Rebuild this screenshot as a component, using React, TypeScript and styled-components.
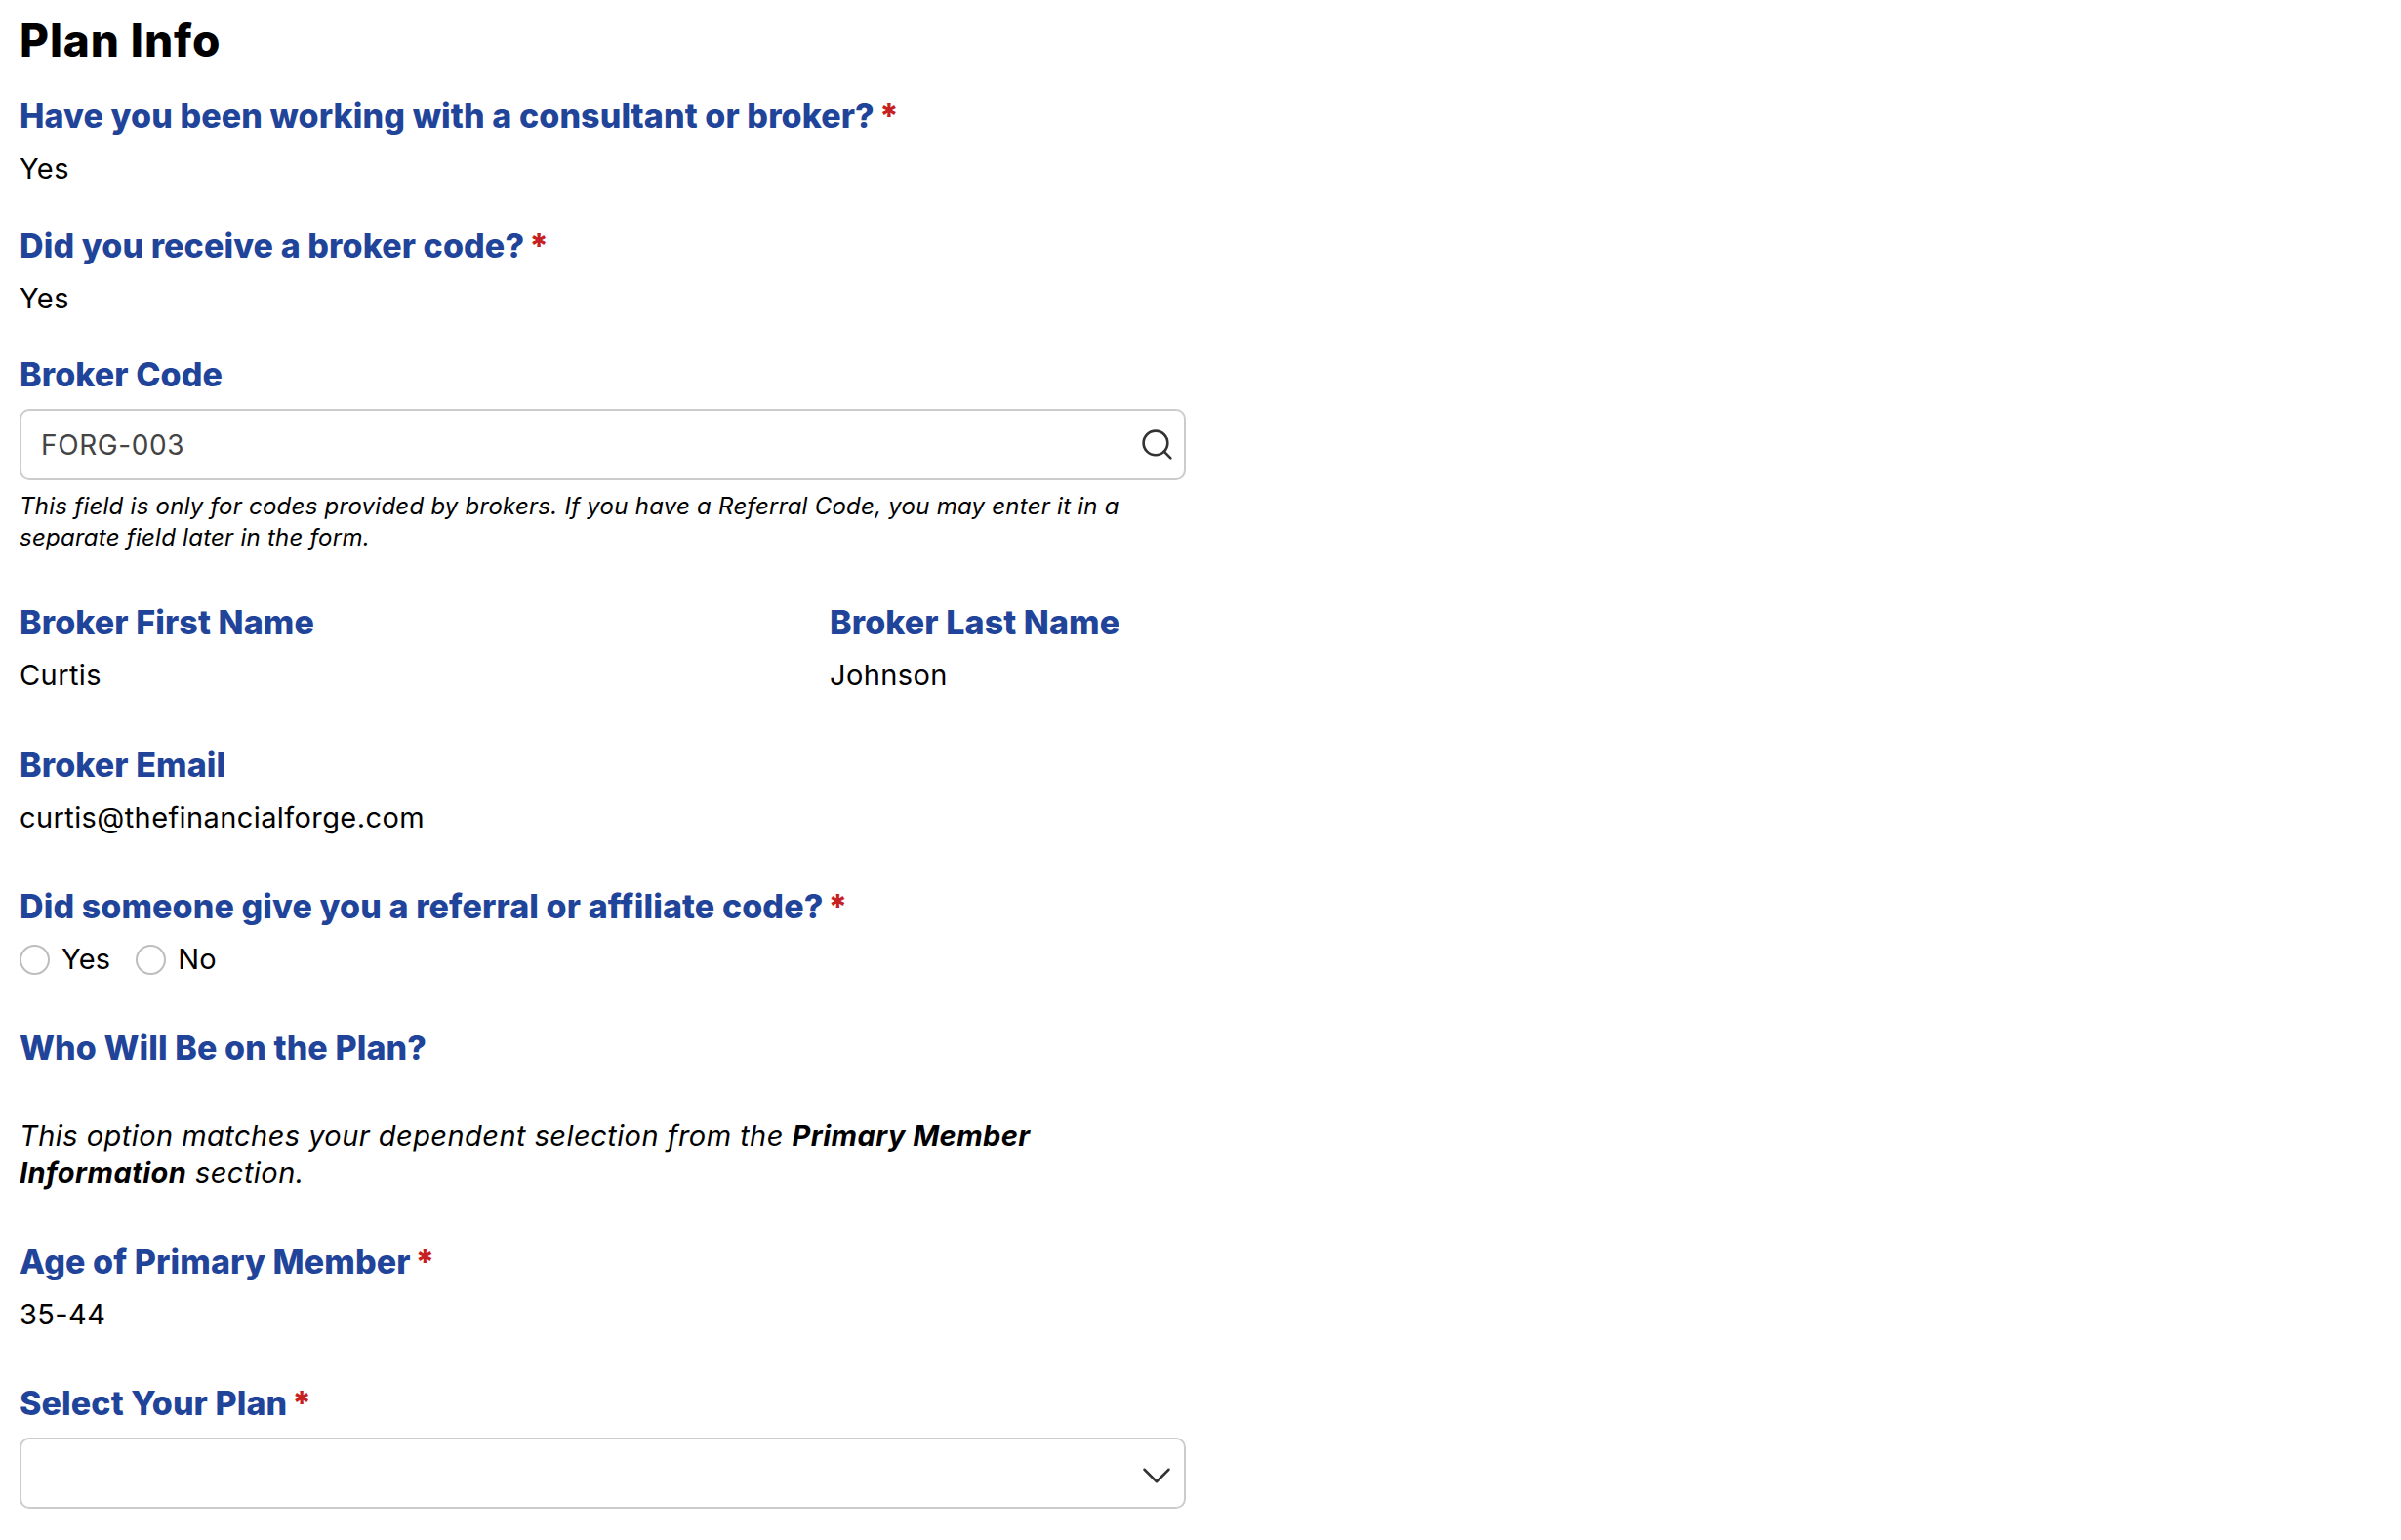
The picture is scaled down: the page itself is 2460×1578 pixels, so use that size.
import React from "react";
import styled, { createGlobalStyle } from "styled-components";
import { Search, ChevronDown } from "lucide-react";

const GlobalStyle = createGlobalStyle`
  html, body {
    margin: 0;
    padding: 0;
    background: #fff;
  }
  body {
    font-family: "Inter", "Noto Sans", sans-serif;
    color: #000;
  }
`;

const Page = styled.div`
  width: 1195px;
  padding: 14px 0 0 20px;
`;
const Title = styled.h2`
  margin: 0 0 31px;
  font-size: 46px;
  line-height: 54px;
  font-weight: 800;
  letter-spacing: 0.9px;
`;
const Field = styled.div<{ $gap?: number }>`
  margin-bottom: ${(props) => props.$gap ?? 53}px;
`;
const Label = styled.div`
  font-size: 34px;
  line-height: 40px;
  font-weight: 800;
  color: #1f4499;
  margin-bottom: 15px;
  letter-spacing: 0.1px;
`;
const Required = styled.span`
  color: #c62020;
  margin-left: 5px;
`;
const Value = styled.div`
  font-size: 29px;
  line-height: 38px;
  letter-spacing: 0.4px;
`;
const InputBox = styled.div<{ $iconPad: number }>`
  box-sizing: border-box;
  height: 73px;
  border: 2.5px solid #cccccc;
  border-radius: 10px;
  padding: 0 ${(props) => props.$iconPad}px 0 20px;
  display: flex;
  align-items: center;
  justify-content: space-between;
  font-size: 28px;
  letter-spacing: 0.6px;
  color: #444;
  background: #fff;
`;
const Hint = styled.div`
  font-size: 24px;
  line-height: 32px;
  font-style: italic;
  letter-spacing: 0.25px;
  margin-top: 11px;
`;
const Columns = styled.div`
  display: grid;
  grid-template-columns: 830px 1fr;
`;
const RadioRow = styled.div`
  display: flex;
  align-items: center;
  gap: 26px;
  font-size: 29px;
  line-height: 38px;
  letter-spacing: 0.2px;
`;
const RadioOption = styled.label`
  display: flex;
  align-items: center;
  gap: 12px;
`;
const RadioCircle = styled.span`
  box-sizing: border-box;
  width: 31px;
  height: 31px;
  border: 2.5px solid #bdbdbd;
  border-radius: 50%;
`;
const Note = styled.div`
  font-size: 29px;
  line-height: 38px;
  font-style: italic;
  letter-spacing: 0.45px;
  width: 1080px;
  b {
    font-weight: 700;
  }
`;
const ChevronIcon = styled(ChevronDown)`
  margin-top: 5px;
`;

const App = () => {
  return (
    <Page>
      <GlobalStyle />
      <Title>Plan Info</Title>
      <Field $gap={40}>
        <Label>Have you been working with a consultant or broker?<Required>*</Required></Label>
        <Value>Yes</Value>
      </Field>
      <Field $gap={39}>
        <Label>Did you receive a broker code?<Required>*</Required></Label>
        <Value>Yes</Value>
      </Field>
      <Field $gap={51}>
        <Label>Broker Code</Label>
        <InputBox $iconPad={9}>
          FORG-003
          <Search size={37} strokeWidth={1.7} color="#333" />
        </InputBox>
        <Hint>
          This field is only for codes provided by brokers. If you have a Referral Code, you may enter it in a separate field later in the form.
        </Hint>
      </Field>
      <Columns>
        <Field>
          <Label>Broker First Name</Label>
          <Value>Curtis</Value>
        </Field>
        <Field>
          <Label>Broker Last Name</Label>
          <Value>Johnson</Value>
        </Field>
      </Columns>
      <Field $gap={52}>
        <Label>Broker Email</Label>
        <Value>curtis@thefinancialforge.com</Value>
      </Field>
      <Field $gap={52}>
        <Label>Did someone give you a referral or affiliate code?<Required>*</Required></Label>
        <RadioRow>
          <RadioOption><RadioCircle />Yes</RadioOption>
          <RadioOption><RadioCircle />No</RadioOption>
        </RadioRow>
      </Field>
      <Field $gap={51}>
        <Label>Who Will Be on the Plan?</Label>
      </Field>
      <Field $gap={52}>
        <Note>
          This option matches your dependent selection from the <b>Primary Member</b> <b>Information</b> section.
        </Note>
      </Field>
      <Field $gap={52}>
        <Label>Age of Primary Member<Required>*</Required></Label>
        <Value>35-44</Value>
      </Field>
      <Field $gap={0}>
        <Label>Select Your Plan<Required>*</Required></Label>
        <InputBox $iconPad={3}>
          <span />
          <ChevronIcon size={50} strokeWidth={1.2} color="#333" />
        </InputBox>
      </Field>
    </Page>
  );
};

export default App;
